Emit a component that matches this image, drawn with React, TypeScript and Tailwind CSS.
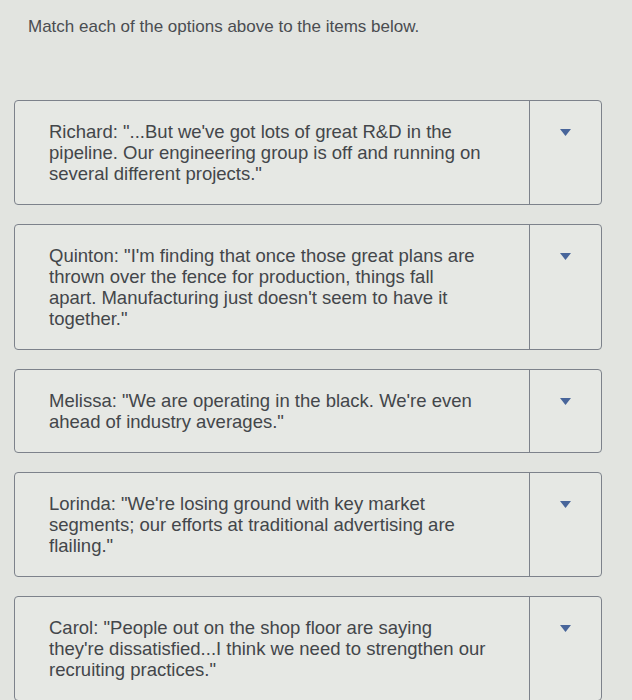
const ITEMS: string[][] = [
  ['Richard: "...But we\'ve got lots of great R&D in the', 'pipeline. Our engineering group is off and running on', 'several different projects."'],
  [
    'Quinton: "I\'m finding that once those great plans are',
    'thrown over the fence for production, things fall',
    'apart. Manufacturing just doesn\'t seem to have it',
    'together."',
  ],
  ['Melissa: "We are operating in the black. We\'re even', 'ahead of industry averages."'],
  ['Lorinda: "We\'re losing ground with key market', 'segments; our efforts at traditional advertising are', 'flailing."'],
  ['Carol: "People out on the shop floor are saying', 'they\'re dissatisfied...I think we need to strengthen our', 'recruiting practices."'],
]

function MatchRow({ lines }: { lines: string[] }) {
  return (
    <div className="flex rounded-[4px] border border-[#7d828b] bg-[#e6e8e4]">
      <div className="flex-1 py-5 pl-[34px] pr-[18px] text-[18.5px] leading-[21px] text-[#43464a]">
        {lines.map((l) => (
          <p key={l} className="whitespace-nowrap">
            {l}
          </p>
        ))}
      </div>
      <div className="flex w-[72px] shrink-0 justify-center border-l border-[#7d828b] pt-[28px]">
        <svg width="11" height="7" viewBox="0 0 11 7">
          <path d="M0 0h11L5.5 7z" fill="#48659a" />
        </svg>
      </div>
    </div>
  )
}

export default function App() {
  return (
    <div
      className="min-h-[700px] bg-[#e2e4e0] pl-[14px] pr-[30px] pt-[17px]"
      style={{ fontFamily: '"Liberation Sans", Arial, sans-serif' }}
    >
      <p className="pl-[14px] text-[17px] leading-[20px] text-[#4a4d51]">Match each of the options above to the items below.</p>
      <div className="mt-[63px] flex flex-col gap-[19px]">
        {ITEMS.map((lines) => (
          <MatchRow key={lines[0]} lines={lines} />
        ))}
      </div>
    </div>
  )
}
